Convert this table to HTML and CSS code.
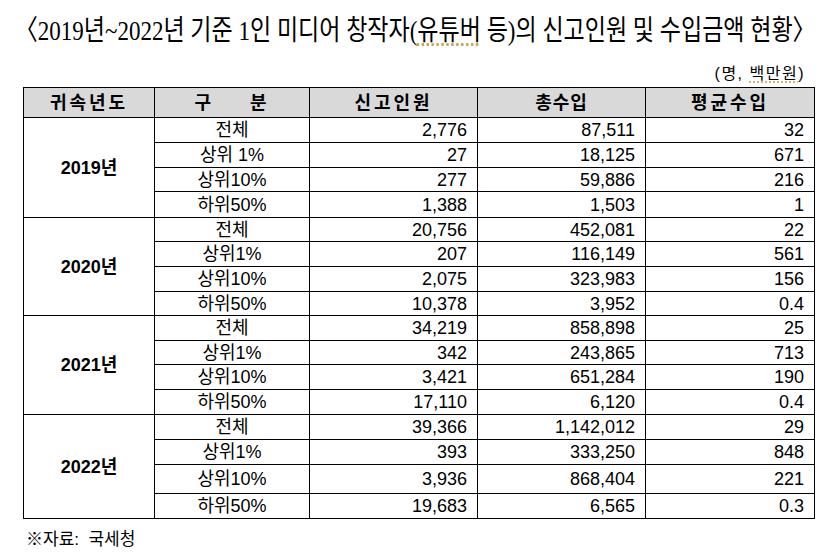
FILE: index.html
```html
<!DOCTYPE html>
<html lang="ko">
<head>
<meta charset="utf-8">
<title>1인 미디어 창작자 신고인원 및 수입금액 현황</title>
<link rel="stylesheet" href="styles.css">
</head>
<body>
<div class="page">
  <h1 class="title"><span class="title-text">〈2019년~2022년 기준 1인 미디어 창작자(<span class="spell">유튜버</span> 등)의 신고인원 및 수입금액 현황〉</span></h1>
  <div class="unit">(명, <span class="spell">백만원</span>)</div>
  <table class="stats">
    <colgroup>
      <col class="c-year"><col class="c-cat"><col class="c-num"><col class="c-num"><col class="c-avg">
    </colgroup>
    <thead>
      <tr class="head">
        <th>귀속년도</th><th><span class="gu">구</span><span>분</span></th><th>신고인원</th><th class="tight">총수입</th><th>평균수입</th>
      </tr>
    </thead>
    <tbody>
      <tr><td class="year" rowspan="4">2019년</td><td class="cat">전체</td><td class="num">2,776</td><td class="num">87,511</td><td class="num">32</td></tr>
      <tr><td class="cat">상위 1%</td><td class="num">27</td><td class="num">18,125</td><td class="num">671</td></tr>
      <tr class="short"><td class="cat">상위10%</td><td class="num">277</td><td class="num">59,886</td><td class="num">216</td></tr>
      <tr class="tall"><td class="cat">하위50%</td><td class="num">1,388</td><td class="num">1,503</td><td class="num">1</td></tr>

      <tr class="short"><td class="year" rowspan="4">2020년</td><td class="cat">전체</td><td class="num">20,756</td><td class="num">452,081</td><td class="num">22</td></tr>
      <tr><td class="cat">상위1%</td><td class="num">207</td><td class="num">116,149</td><td class="num">561</td></tr>
      <tr><td class="cat">상위10%</td><td class="num">2,075</td><td class="num">323,983</td><td class="num">156</td></tr>
      <tr class="short"><td class="cat">하위50%</td><td class="num">10,378</td><td class="num">3,952</td><td class="num">0.4</td></tr>

      <tr><td class="year" rowspan="4">2021년</td><td class="cat">전체</td><td class="num">34,219</td><td class="num">858,898</td><td class="num">25</td></tr>
      <tr class="short"><td class="cat">상위1%</td><td class="num">342</td><td class="num">243,865</td><td class="num">713</td></tr>
      <tr><td class="cat">상위10%</td><td class="num">3,421</td><td class="num">651,284</td><td class="num">190</td></tr>
      <tr><td class="cat">하위50%</td><td class="num">17,110</td><td class="num">6,120</td><td class="num">0.4</td></tr>

      <tr><td class="year" rowspan="4">2022년</td><td class="cat">전체</td><td class="num">39,366</td><td class="num">1,142,012</td><td class="num">29</td></tr>
      <tr><td class="cat">상위1%</td><td class="num">393</td><td class="num">333,250</td><td class="num">848</td></tr>
      <tr class="xtall"><td class="cat">상위10%</td><td class="num">3,936</td><td class="num">868,404</td><td class="num">221</td></tr>
      <tr><td class="cat">하위50%</td><td class="num">19,683</td><td class="num">6,565</td><td class="num">0.3</td></tr>
    </tbody>
  </table>
  <p class="source">※자료:&nbsp; 국세청</p>
</div>
</body>
</html>
```
FILE: styles.css
```css
html, body {
  margin: 0;
  padding: 0;
  background: #ffffff;
}

.page {
  width: 831px;
  height: 556px;
  overflow: hidden;
  color: #000000;
  font-family: "Liberation Sans", "Noto Sans CJK KR", sans-serif;
}

.title {
  margin: 0;
  padding-top: 17px;
  height: 28px;
  line-height: 28px;
  font-size: 28px;
  font-weight: 400;
  display: flex;
  justify-content: center;
  white-space: nowrap;
  font-family: "Liberation Serif", "Noto Sans CJK KR", serif;
}

.title-text {
  display: inline-block;
  flex: none;
  transform: scaleX(0.822);
  transform-origin: center;
}

.spell {
  text-decoration: underline dotted #c9a24a;
  text-underline-offset: 3px;
}

.unit {
  margin-top: 20px;
  height: 18px;
  line-height: 18px;
  font-size: 16px;
  text-align: right;
  padding-right: 26px;
  letter-spacing: 1.5px;
}

.stats {
  margin-top: 4px;
  margin-left: 23px;
  width: 792px;
  table-layout: fixed;
  border-collapse: collapse;
  font-size: 18px;
}

.c-year { width: 131px; }
.c-cat { width: 155px; }
.c-num { width: 168px; }
.c-avg { width: 169px; }

.stats th,
.stats td {
  border: 1px solid #000000;
  padding: 0;
  height: 24px;
  line-height: 20px;
  vertical-align: middle;
}

.stats .head th {
  height: 29px;
  background: #d9d9d9;
  font-weight: 700;
  letter-spacing: 3px;
  text-align: center;
}

.stats .head th.tight {
  letter-spacing: 1px;
}

.gu {
  margin-right: 36px;
}

.stats tr.short td { height: 23px; }
.stats tr.tall td { height: 25px; }
.stats tr.xtall td { height: 28px; }

.stats td.year {
  text-align: center;
  font-weight: 700;
}

.stats td.cat {
  text-align: center;
}

.stats td.num {
  text-align: right;
  padding-right: 10px;
}

.source {
  margin: 11px 0 0 26px;
  line-height: 20px;
  font-size: 17px;
}
```
